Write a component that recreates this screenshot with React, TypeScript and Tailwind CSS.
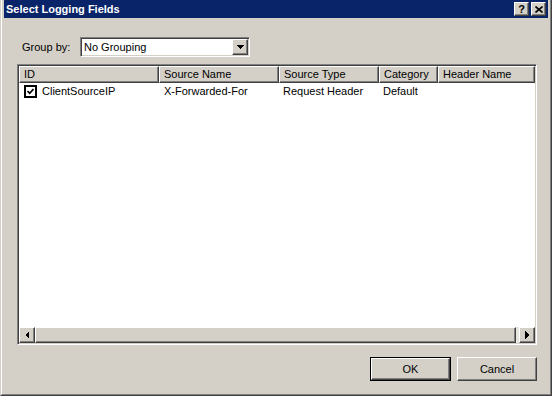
import React from 'react';

const raised =
  'border border-t-white border-l-white border-r-[#404040] border-b-[#404040] shadow-[inset_-1px_-1px_0_#808080] bg-[#d4d0c8]';
const sunken =
  'border border-t-[#808080] border-l-[#808080] border-r-white border-b-white shadow-[inset_1px_1px_0_#404040,inset_-1px_-1px_0_#d4d0c8]';

const columns = [
  { name: 'ID', width: 'w-[140px]' },
  { name: 'Source Name', width: 'w-[120px]' },
  { name: 'Source Type', width: 'w-[100px]' },
  { name: 'Category', width: 'w-[59px]' },
  { name: 'Header Name', width: 'w-[97px]' },
];

const Arrow: React.FC<{ dir: 'left' | 'right' | 'down' }> = ({ dir }) => {
  const pts = dir === 'left' ? '4,0 4,8 0,4' : dir === 'right' ? '0,0 0,8 4,4' : '0,0 7,0 3.5,4';
  const w = dir === 'down' ? 7 : 4;
  const h = dir === 'down' ? 4 : 8;
  return (
    <svg width={w} height={h} viewBox={`0 0 ${w} ${h}`} shapeRendering="crispEdges">
      <polygon points={pts} fill="#000" />
    </svg>
  );
};

export default function App() {
  return (
    <div className="w-[552px] h-[396px] bg-[#d4d0c8] border-l border-l-[#d4d0c8] border-r border-b border-r-[#404040] border-b-[#404040] font-['Liberation_Sans',Arial,sans-serif] text-[11px] text-black overflow-hidden">
      <div className="h-full border-l border-r border-b border-l-white border-r-[#808080] border-b-[#808080] px-[2px] flex flex-col">
        {/* title bar */}
        <div className="h-[18px] bg-[#0a246a] flex items-center justify-between pl-[2px] pr-[2px]">
          <span className="text-white font-bold text-[11px] leading-none">Select Logging Fields</span>
          <div className="flex gap-[2px]">
            <div className={`${raised} w-[15px] h-[14px] flex items-center justify-center font-bold text-[11px] leading-none`}>?</div>
            <div className={`${raised} w-[15px] h-[14px] flex items-center justify-center`}>
              <svg width="8" height="7" viewBox="0 0 8 7">
                <path d="M0.5 0.5 L7.5 6.5 M7.5 0.5 L0.5 6.5" stroke="#000" strokeWidth="1.6" />
              </svg>
            </div>
          </div>
        </div>

        {/* group by row */}
        <div className="flex items-center mt-[19px] ml-[18px] h-[20px]">
          <span className="w-[58px]">Group by:</span>
          <div className={`${sunken} w-[170px] h-[20px] bg-white flex items-center justify-between pl-[3px] pr-[1px]`}>
            <span>No Grouping</span>
            <div className={`${raised} w-[16px] h-[16px] flex items-center justify-center`}>
              <Arrow dir="down" />
            </div>
          </div>
        </div>

        {/* list view */}
        <div className={`${sunken} mt-[7px] ml-[13px] w-[520px] h-[281px] bg-white flex flex-col p-[1px]`}>
          <div className="flex h-[17px] overflow-hidden shrink-0">
            {columns.map(c => (
              <div key={c.name} className={`${raised} ${c.width} shrink-0 h-[17px] flex items-center pl-[4px] whitespace-nowrap`}>
                {c.name}
              </div>
            ))}
          </div>
          <div className="flex-1">
            <div className="flex h-[17px] items-center">
              <div className="w-[140px] flex items-center pl-[5px] gap-[5px]">
                <div className="w-[13px] h-[13px] border-2 border-black bg-white flex items-center justify-center">
                  <svg width="7" height="7" viewBox="0 0 7 7">
                    <path d="M0.5 3 L2.7 5.3 L6.5 1" stroke="#000" strokeWidth="1.7" fill="none" />
                  </svg>
                </div>
                <span>ClientSourceIP</span>
              </div>
              <div className="w-[120px] pl-[5px]">X-Forwarded-For</div>
              <div className="w-[100px] pl-[4px]">Request Header</div>
              <div className="w-[59px] pl-[4px]">Default</div>
            </div>
          </div>
          {/* horizontal scrollbar */}
          <div className="flex h-[16px] shrink-0">
            <div className={`${raised} w-[16px] h-[16px] flex items-center justify-center`}>
              <Arrow dir="left" />
            </div>
            <div className={`${raised} flex-1 h-[16px]`} />
            <div className="w-[3px] h-[16px] bg-[#e8e6e1]" />
            <div className={`${raised} w-[16px] h-[16px] flex items-center justify-center`}>
              <Arrow dir="right" />
            </div>
          </div>
        </div>

        {/* buttons */}
        <div className="flex justify-end gap-[6px] mt-[12px] mr-[11px]">
          <div className="w-[81px] h-[24px] border border-black">
            <div className={`${raised} w-full h-full flex items-center justify-center`}>OK</div>
          </div>
          <div className={`${raised} w-[80px] h-[24px] flex items-center justify-center`}>Cancel</div>
        </div>
      </div>
    </div>
  );
}
